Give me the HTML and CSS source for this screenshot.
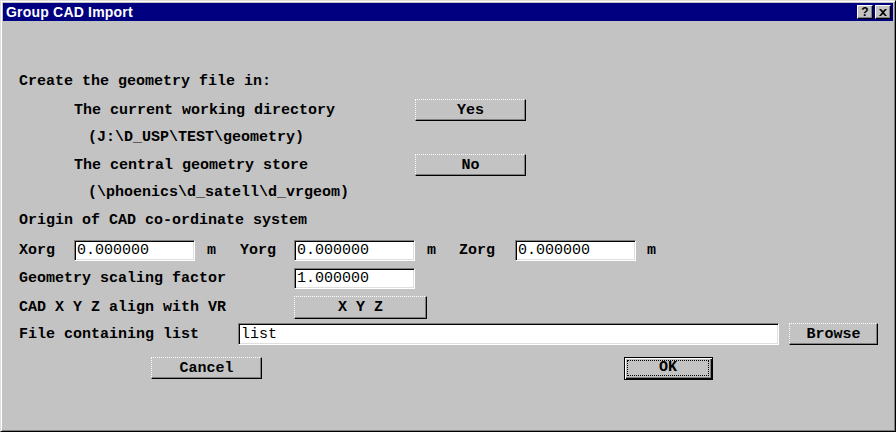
FILE: index.html
```html
<!DOCTYPE html>
<html>
<head>
<meta charset="utf-8">
<title>Group CAD Import</title>
<link rel="stylesheet" href="styles.css">
</head>
<body>
<div class="window">
  <div class="titlebar">
    <span class="title">Group CAD Import</span>
    <div class="tb-buttons">
      <span class="tb-btn help">?</span>
      <span class="tb-btn close">
        <svg width="8" height="7" viewBox="0 0 8 7"><path d="M0 0h2l2 2 2-2h2L5 3.5 8 7H6L4 5 2 7H0l3-3.5z" fill="#000"/></svg>
      </span>
    </div>
  </div>
  <div class="content">
    <div class="row r1"><span class="label">Create the geometry file in:</span></div>
    <div class="row r2"><span class="label ind w-ind">The current working directory</span><button class="btn w111">Yes</button></div>
    <div class="row r3"><span class="label sub">(J:\D_USP\TEST\geometry)</span></div>
    <div class="row r4"><span class="label ind w-ind">The central geometry store</span><button class="btn w111">No</button></div>
    <div class="row r5"><span class="label sub">(\phoenics\d_satell\d_vrgeom)</span></div>
    <div class="row r6"><span class="label">Origin of CAD co-ordinate system</span></div>
    <div class="row r7">
      <span class="label c-x">Xorg</span><input class="field w121" type="text" value="0.000000">
      <span class="label c-m1">m</span><span class="label c-y">Yorg</span><input class="field w121" type="text" value="0.000000">
      <span class="label c-m2">m</span><span class="label c-z">Zorg</span><input class="field w121" type="text" value="0.000000">
      <span class="label c-m3">m</span>
    </div>
    <div class="row r8"><span class="label w275">Geometry scaling factor</span><input class="field w121" type="text" value="1.000000"></div>
    <div class="row r9"><span class="label w275">CAD X Y Z align with VR</span><button class="btn w133 tall">X Y Z</button></div>
    <div class="row r10"><span class="label w219">File containing list</span><input class="field w541" type="text" value="list"><button class="btn w89 browse">Browse</button></div>
    <div class="row r11">
      <button class="btn w111 cancel">Cancel</button>
      <button class="btn w89 default"><span class="focus">OK</span></button>
    </div>
  </div>
</div>
</body>
</html>
```
FILE: styles.css
```css
html, body {
  margin: 0;
  padding: 0;
  background: #c3c3c3;
}

.window {
  width: 896px;
  height: 432px;
  box-sizing: border-box;
  background: #c3c3c3;
  border: 1px solid;
  border-color: #dfdfdf #000 #000 #dfdfdf;
  box-shadow: inset 1px 1px #fff, inset -1px -1px #808080;
  padding: 2px 2px 2px 2px;
  display: flex;
  flex-direction: column;
}

.titlebar {
  height: 18px;
  background: #000080;
  display: flex;
  align-items: center;
  justify-content: space-between;
  padding: 0 2px 0 3px;
}

.title {
  color: #fff;
  font-family: "Liberation Sans", Arial, sans-serif;
  font-weight: bold;
  font-size: 14px;
  letter-spacing: 0.2px;
}

.tb-buttons {
  display: flex;
  gap: 2px;
}

.tb-btn {
  width: 16px;
  height: 14px;
  box-sizing: border-box;
  background: #c3c3c3;
  border: 1px solid;
  border-color: #fff #000 #000 #fff;
  box-shadow: inset -1px -1px #808080;
  display: flex;
  align-items: center;
  justify-content: center;
  font-family: "Liberation Sans", Arial, sans-serif;
  font-weight: bold;
  font-size: 12px;
  line-height: 1;
  color: #000;
}

.content {
  padding: 0 0 0 16px;
  display: flex;
  flex-direction: column;
}

.row {
  height: 22px;
  display: flex;
  align-items: center;
  font-family: "Liberation Mono", "Courier New", monospace;
  font-weight: bold;
  font-size: 15px;
  color: #000;
}

.r1 { margin-top: 49px; }
.r2 { margin-top: 7px; }
.r3 { margin-top: 5px; }
.r4 { margin-top: 6px; }
.r5 { margin-top: 5px; }
.r6 { margin-top: 6px; }
.r7 { margin-top: 8px; }
.r8 { margin-top: 6px; }
.r9 { margin-top: 7px; }
.r10 { margin-top: 5px; }
.r11 { margin-top: 12px; padding-left: 132px; }

.label {
  white-space: pre;
  flex: none;
}

.ind { padding-left: 55px; }
.w-ind { width: 341px; }
.sub { padding-left: 69px; }

.c-x { width: 55px; }
.c-m1 { width: 33px; padding-left: 12px; }
.c-y { width: 54px; }
.c-m2 { width: 32px; padding-left: 12px; }
.c-z { width: 56px; }
.c-m3 { padding-left: 11px; }

.w275 { width: 275px; }
.w219 { width: 219px; }

.field {
  box-sizing: border-box;
  height: 21px;
  margin: 0;
  padding: 0 2px;
  background: #fff;
  border: 1px solid;
  border-color: #808080 #fff #fff #808080;
  box-shadow: inset 1px 1px #000, inset -1px -1px #dfdfdf;
  font-family: "Liberation Mono", "Courier New", monospace;
  font-weight: normal;
  font-size: 15px;
  color: #000;
  outline: none;
  flex: none;
}

.w121 { width: 121px; }
.w541 { width: 541px; height: 22px; }

.btn {
  box-sizing: border-box;
  height: 22px;
  margin: 0;
  padding: 0;
  background: #c3c3c3;
  border-style: dotted solid solid dotted;
  border-width: 1px;
  border-color: #fff #000 #000 #fff;
  box-shadow: inset -1px -1px #808080;
  font-family: "Liberation Mono", "Courier New", monospace;
  font-weight: bold;
  font-size: 15px;
  color: #000;
  flex: none;
}

.w111 { width: 111px; }
.w133 { width: 133px; }
.w89 { width: 89px; }
.tall { height: 23px; }
.browse { margin-left: 10px; }

.default {
  margin-left: 362px;
  height: 23px;
  border: 1px solid #000;
  box-shadow: inset 1px 1px #fff, inset -1px -1px #000, inset -2px -2px #808080;
  padding: 3px 4px 4px 3px;
  display: flex;
}

.focus {
  flex: 1;
  display: flex;
  align-items: center;
  justify-content: center;
  outline: 1px dotted #000;
  line-height: 1;
}
```
